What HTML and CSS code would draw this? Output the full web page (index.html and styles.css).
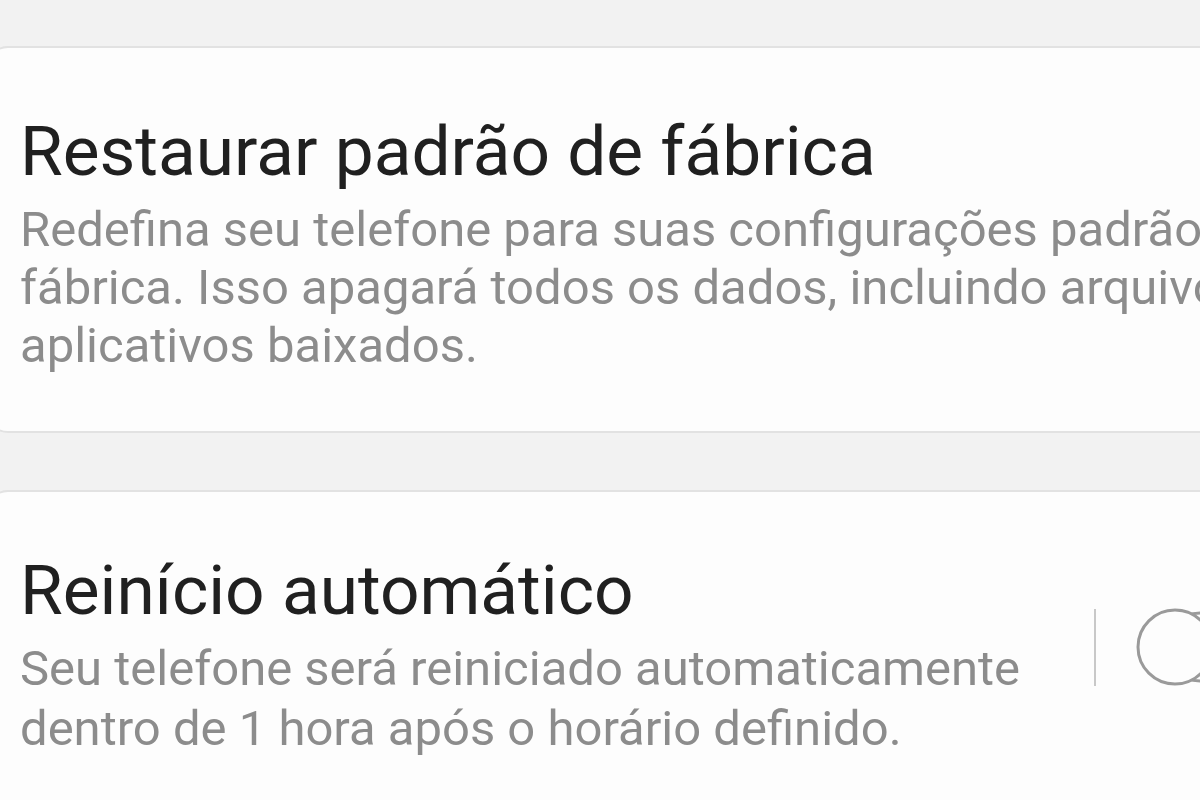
FILE: index.html
```html
<!DOCTYPE html>
<html lang="pt">
<head>
<meta charset="utf-8">
<link rel="stylesheet" href="styles.css">
</head>
<body>
<div class="screen">
  <section class="card card-reset">
    <h2 class="title">Restaurar padrão de fábrica</h2>
    <p class="desc desc-wide">Redefina seu telefone para suas configurações padrão de fábrica. Isso apagará todos os dados, incluindo arquivos e aplicativos baixados.</p>
  </section>
  <section class="card card-restart">
    <div class="row">
      <div class="text">
        <h2 class="title">Reinício automático</h2>
        <p class="desc desc-narrow">Seu telefone será reiniciado automaticamente dentro de 1 hora após o horário definido.</p>
      </div>
      <div class="divider"></div>
      <svg class="toggle" width="110" height="80" viewBox="0 0 110 80">
        <rect x="30" y="6" width="120" height="68" rx="34" fill="none" stroke="#9a9a9a" stroke-width="3"/>
        <circle cx="39" cy="40" r="37" fill="#fdfdfd" stroke="#9a9a9a" stroke-width="3"/>
      </svg>
    </div>
  </section>
</div>
</body>
</html>
```
FILE: styles.css
```css
html, body {
  margin: 0;
  padding: 0;
  background: #f2f2f2;
  overflow: hidden;
  width: 1200px;
  height: 800px;
}
.screen {
  padding-top: 46px;
  font-family: Roboto, "Noto Sans", sans-serif;
}
.card {
  background: #fdfdfd;
  border: 2px solid #e2e2e2;
  border-radius: 22px;
  margin-left: -14px;
  width: 1340px;
  box-sizing: border-box;
  padding-left: 32px;
}
.card-reset {
  height: 387px;
  padding-top: 64px;
}
.card-restart {
  margin-top: 57px;
  height: 400px;
  padding-top: 59px;
}
.title {
  margin: 0;
  font-size: 69.4px;
  line-height: 80px;
  font-weight: 400;
  color: #202020;
}
.desc {
  margin: 9px 0 0;
  font-size: 49px;
  line-height: 58px;
  color: #8c8c8c;
  font-weight: 400;
}
.desc-wide {
  width: 1320px;
}
.row {
  display: flex;
  align-items: center;
}
.text {
  width: 1060px;
  flex: none;
}
.desc-narrow {
  line-height: 60px;
  margin-top: 8px;
}
.divider {
  width: 2px;
  height: 77px;
  background: #c8c8c8;
  margin-left: 14px;
  margin-bottom: 16px;
  flex: none;
}
.toggle {
  flex: none;
  margin-left: 40px;
  margin-bottom: 16px;
}
```
